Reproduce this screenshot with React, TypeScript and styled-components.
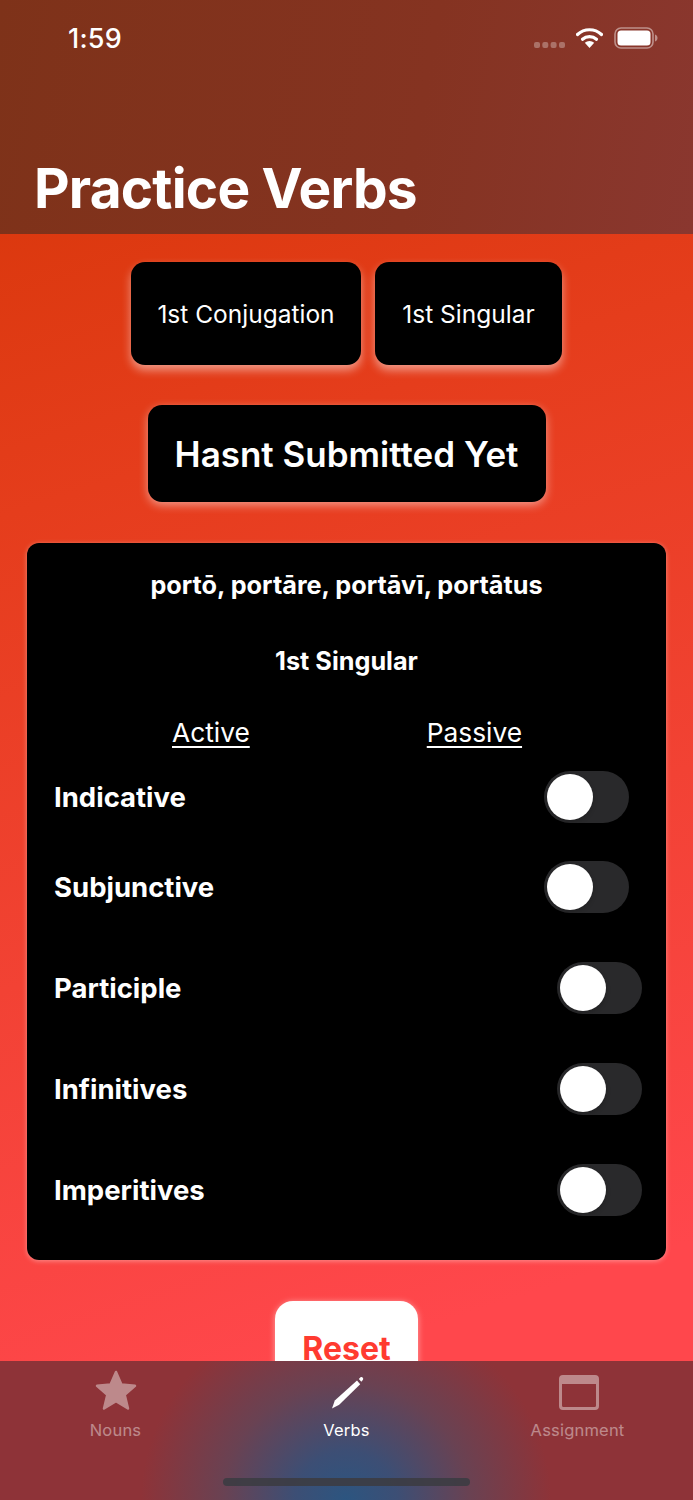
import * as React from "react";
import styled, { createGlobalStyle } from "styled-components";

const FONT = `Inter, "Liberation Sans", sans-serif`;

const formRows = [
  { label: "Indicative" },
  { label: "Subjunctive" },
];

const otherRows = [
  { label: "Participle" },
  { label: "Infinitives" },
  { label: "Imperitives" },
];

function Toggle() {
  return (
    <Track>
      <Knob />
    </Track>
  );
}

function StatusIcons() {
  return (
    <StatusRight>
      <SignalDots width="31" height="6" viewBox="0 0 31 6">
        <rect x="0" y="0" width="6" height="6" rx="2" fill="#fff" opacity=".3" />
        <rect x="8.300" y="0" width="6" height="6" rx="2" fill="#fff" opacity=".3" />
        <rect x="16.600" y="0" width="6" height="6" rx="2" fill="#fff" opacity=".3" />
        <rect x="25" y="0" width="6" height="6" rx="2" fill="#fff" opacity=".3" />
      </SignalDots>
      <svg width="27" height="22" viewBox="0 0 27 22">
        <path d="M1.500 7.500A17.500 17.500 0 0 1 25.500 7.500" fill="none" stroke="#fff" strokeWidth="3.200" strokeLinecap="round" />
        <path d="M6.500 12.200A10.500 10.500 0 0 1 20.500 12.200" fill="none" stroke="#fff" strokeWidth="3.200" strokeLinecap="round" />
        <path d="M8.800 15.700A7 7 0 0 1 18.200 15.700L13.500 21Z" fill="#fff" />
      </svg>
      <svg width="44" height="22" viewBox="0 0 44 22">
        <rect x="1" y="1" width="38" height="20" rx="6" fill="none" stroke="#fff" strokeOpacity=".45" strokeWidth="1.600" />
        <rect x="3.500" y="3.500" width="33" height="15" rx="3.500" fill="#fff" />
        <path d="M41 7.500c1.500.4 2.500 1.800 2.500 3.500s-1 3.100-2.500 3.500Z" fill="#fff" fillOpacity=".45" />
      </svg>
    </StatusRight>
  );
}

function StarIcon() {
  return (
    <svg width="44" height="44" viewBox="0 0 44 44">
      <path
        d="M22 3L27.400 15.600L41 16.800L30.700 25.900L34 39.500L22 32.300L10 39.500L13.300 25.900L3 16.800L16.600 15.600Z"
        fill="#fff"
        stroke="#fff"
        strokeWidth="2.500"
        strokeLinejoin="round"
      />
    </svg>
  );
}

function PencilIcon() {
  return (
    <svg width="44" height="44" viewBox="0 0 44 44">
      <path d="M7 39.500L9.800 31.500L32 11.500L35.200 15.200L14.200 35.800Z" fill="#fff" />
      <path d="M33.800 10L35.300 8.600C36.100 7.900 37.200 8 37.800 8.700C38.400 9.400 38.300 10.500 37.600 11.200L36.300 12.700Z" fill="#fff" />
    </svg>
  );
}

function WindowIcon() {
  return (
    <svg width="44" height="44" viewBox="0 0 44 44">
      <path
        fillRule="evenodd"
        clipRule="evenodd"
        d="M7 6H39A4 4 0 0 1 43 10V37A4 4 0 0 1 39 41H7A4 4 0 0 1 3 37V10A4 4 0 0 1 7 6ZM6 15V36.500A1.500 1.500 0 0 0 7.500 38H38.500A1.500 1.500 0 0 0 40 36.500V15Z"
        fill="#fff"
      />
    </svg>
  );
}

export default function App() {
  return (
    <>
      <GlobalStyle />
      <Screen>
        <Header>
          <StatusBar>
            <Time>1:59</Time>
            <StatusIcons />
          </StatusBar>
          <Title>Practice Verbs</Title>
        </Header>

        <Content>
          <PickerRow>
            <PickerButton $width={230}>1st Conjugation</PickerButton>
            <PickerButton $width={187}>1st Singular</PickerButton>
          </PickerRow>

          <StatusButton>Hasnt Submitted Yet</StatusButton>

          <Card>
            <VerbName>portō, portāre, portāvī, portātus</VerbName>
            <PersonName>1st Singular</PersonName>
            <VoiceRow>
              <Voice>Active</Voice>
              <Voice>Passive</Voice>
            </VoiceRow>
            <FormGroup $gap={38} $inset={37}>
              {formRows.map((row) => (
                <FormRow key={row.label}>
                  <FormLabel>{row.label}</FormLabel>
                  <Toggle />
                </FormRow>
              ))}
            </FormGroup>
            <FormGroup $gap={49} $inset={24} $top={49}>
              {otherRows.map((row) => (
                <FormRow key={row.label}>
                  <FormLabel>{row.label}</FormLabel>
                  <Toggle />
                </FormRow>
              ))}
            </FormGroup>
          </Card>

          <ResetButton>Reset</ResetButton>
        </Content>

        <TabBar>
          <Tab>
            <StarIcon />
            <TabLabel>Nouns</TabLabel>
          </Tab>
          <Tab $active>
            <PencilIcon />
            <TabLabel>Verbs</TabLabel>
          </Tab>
          <Tab>
            <WindowIcon />
            <TabLabel>Assignment</TabLabel>
          </Tab>
          <HomeIndicator />
        </TabBar>
      </Screen>
    </>
  );
}

const GlobalStyle = createGlobalStyle`
  html, body {
    margin: 0;
    padding: 0;
    background: #000;
  }
  * {
    box-sizing: border-box;
  }
`;

const Screen = styled.div`
  width: 693px;
  height: 1500px;
  display: flex;
  flex-direction: column;
  overflow: hidden;
  font-family: ${FONT};
  color: #fff;
  background: linear-gradient(162deg, #d43504 0%, #e53d1c 30%, #ff474c 85%);
`;

const Header = styled.header`
  height: 234px;
  flex: none;
  padding: 0 35px 0 34px;
  display: flex;
  flex-direction: column;
  justify-content: space-between;
  background: linear-gradient(100deg, #7e3219 0%, #853321 60%, #8a372f 100%);
`;

const StatusBar = styled.div`
  display: flex;
  justify-content: space-between;
  align-items: center;
  height: 34px;
  margin-top: 21px;
  padding-left: 34px;
`;

const Time = styled.span`
  font-size: 27px;
  font-weight: 500;
  letter-spacing: 0.2px;
`;

const StatusRight = styled.div`
  display: flex;
  align-items: center;
  gap: 11px;
`;

const SignalDots = styled.svg`
  margin-top: 14px;
`;

const Title = styled.h1`
  margin: 0 0 12px;
  font-size: 55px;
  line-height: 68px;
  font-weight: 700;
  letter-spacing: -0.800px;
`;

const Content = styled.main`
  flex: 1;
  min-height: 0;
  overflow: hidden;
  padding-top: 28px;
  display: flex;
  flex-direction: column;
  align-items: center;
`;

const PickerRow = styled.div`
  display: flex;
  flex: none;
  gap: 14px;
`;

const PickerButton = styled.button<{ $width: number }>`
  width: ${(p) => p.$width}px;
  height: 103px;
  padding: 0;
  border: none;
  border-radius: 14px;
  background: #000;
  color: #fff;
  font-family: ${FONT};
  font-size: 24.500px;
  font-weight: 400;
  box-shadow: 0 5px 10px rgba(255, 255, 255, 0.48);
`;

const StatusButton = styled.button`
  width: 398px;
  height: 97px;
  flex: none;
  margin-top: 40px;
  padding: 0;
  border: none;
  border-radius: 14px;
  background: #000;
  color: #fff;
  font-family: ${FONT};
  font-size: 35px;
  font-weight: 600;
  box-shadow: 0 3px 10px rgba(255, 255, 255, 0.48);
`;

const Card = styled.section`
  width: 639px;
  flex: none;
  margin-top: 41px;
  padding: 27px 0 44px;
  border-radius: 12px;
  background: #000;
  box-shadow: 0 1px 5px rgba(255, 255, 255, 0.4);
`;

const VerbName = styled.div`
  font-size: 25.250px;
  line-height: 30px;
  font-weight: 700;
  text-align: center;
`;

const PersonName = styled(VerbName)`
  margin-top: 46px;
`;

const VoiceRow = styled.div`
  display: flex;
  margin-top: 39px;
  padding-left: 145px;
  gap: 177px;
`;

const Voice = styled.span`
  font-size: 26.300px;
  line-height: 36px;
  font-weight: 400;
  text-decoration: underline;
  text-underline-offset: 4px;
  text-decoration-thickness: 2px;
`;

const FormGroup = styled.div<{ $gap: number; $inset: number; $top?: number }>`
  display: flex;
  flex-direction: column;
  gap: ${(p) => p.$gap}px;
  margin-top: ${(p) => p.$top ?? 20}px;
  padding: 0 ${(p) => p.$inset}px 0 27px;
`;

const FormRow = styled.div`
  display: flex;
  justify-content: space-between;
  align-items: center;
  height: 52px;
`;

const FormLabel = styled.span`
  font-size: 27.500px;
  font-weight: 700;
`;

const Track = styled.div`
  width: 85px;
  height: 52px;
  padding: 3px;
  border-radius: 26px;
  background: #29292b;
`;

const Knob = styled.div`
  width: 46px;
  height: 46px;
  border-radius: 50%;
  background: #fff;
  box-shadow: 0 2px 5px rgba(0, 0, 0, 0.2);
`;

const ResetButton = styled.button`
  width: 143px;
  height: 94px;
  flex: none;
  margin-top: 41px;
  padding: 0;
  border: none;
  border-radius: 18px;
  background: #fff;
  color: #ff3b30;
  font-family: ${FONT};
  font-size: 32px;
  font-weight: 700;
  box-shadow: 0 1px 6px rgba(255, 255, 255, 0.5);
`;

const TabBar = styled.nav`
  position: relative;
  height: 139px;
  flex: none;
  display: grid;
  grid-template-columns: repeat(3, 1fr);
  padding-top: 8px;
  background:
    radial-gradient(ellipse 205px 195px at 346px 139px, #2c5580 0%, rgba(56, 80, 120, 0.95) 25%, rgba(95, 70, 90, 0.78) 60%, rgba(140, 51, 56, 0) 100%),
    #8e3338;
`;

const Tab = styled.div<{ $active?: boolean }>`
  display: flex;
  flex-direction: column;
  align-items: center;
  color: #fff;
  opacity: ${(p) => (p.$active ? 1 : 0.42)};
`;

const TabLabel = styled.span`
  margin-top: 7px;
  font-size: 16.500px;
  line-height: 20px;
  font-weight: 400;
  letter-spacing: 0.2px;
`;

const HomeIndicator = styled.div`
  position: absolute;
  left: 223px;
  bottom: 14px;
  width: 247px;
  height: 8px;
  border-radius: 4px;
  background: rgba(60, 60, 67, 0.9);
`;
